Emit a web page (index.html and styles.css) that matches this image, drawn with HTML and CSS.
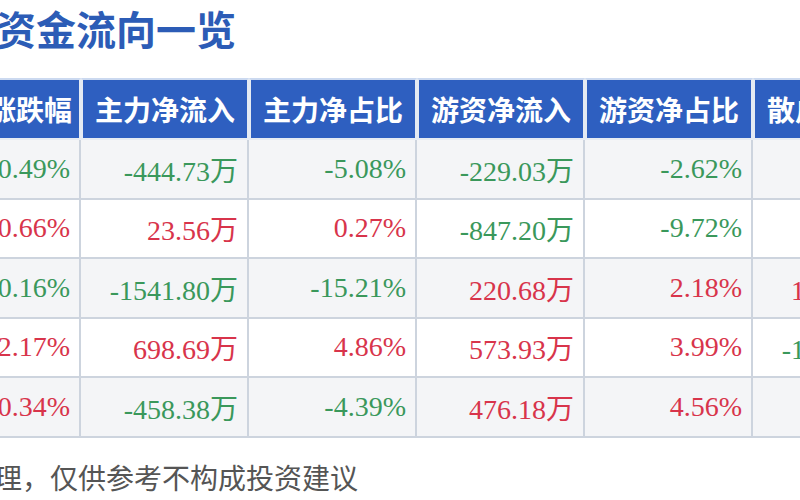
FILE: index.html
```html
<!DOCTYPE html>
<html lang="zh-CN">
<head>
<meta charset="utf-8">
<title>资金流向一览</title>
<link rel="stylesheet" href="styles.css">
</head>
<body>
<div class="page">
  <h1 class="title">资金流向一览</h1>
  <table class="flow">
    <colgroup>
      <col class="c-first">
      <col class="c-col"><col class="c-col"><col class="c-col"><col class="c-col"><col class="c-col">
    </colgroup>
    <thead>
      <tr>
        <th>涨跌幅</th>
        <th>主力净流入</th>
        <th>主力净占比</th>
        <th>游资净流入</th>
        <th>游资净占比</th>
        <th>散户净流入</th>
      </tr>
    </thead>
    <tbody>
      <tr class="shade">
        <td class="dn">-0.49%</td>
        <td class="dn">-444.73万</td>
        <td class="dn">-5.08%</td>
        <td class="dn">-229.03万</td>
        <td class="dn">-2.62%</td>
        <td class="up">673.76万</td>
      </tr>
      <tr>
        <td class="up">0.66%</td>
        <td class="up">23.56万</td>
        <td class="up">0.27%</td>
        <td class="dn">-847.20万</td>
        <td class="dn">-9.72%</td>
        <td class="up">823.64万</td>
      </tr>
      <tr class="shade">
        <td class="dn">-0.16%</td>
        <td class="dn">-1541.80万</td>
        <td class="dn">-15.21%</td>
        <td class="up">220.68万</td>
        <td class="up">2.18%</td>
        <td class="up">1321.12万</td>
      </tr>
      <tr>
        <td class="up">2.17%</td>
        <td class="up">698.69万</td>
        <td class="up">4.86%</td>
        <td class="up">573.93万</td>
        <td class="up">3.99%</td>
        <td class="dn">-1272.62万</td>
      </tr>
      <tr class="shade">
        <td class="up">0.34%</td>
        <td class="dn">-458.38万</td>
        <td class="dn">-4.39%</td>
        <td class="up">476.18万</td>
        <td class="up">4.56%</td>
        <td class="dn">-17.80万</td>
      </tr>
    </tbody>
  </table>
  <p class="note">理，仅供参考不构成投资建议</p>
</div>
</body>
</html>
```

FILE: styles.css
```css
html, body {
  margin: 0;
  padding: 0;
  background: #ffffff;
}

.page {
  width: 800px;
  height: 500px;
  overflow: hidden;
  font-family: "Noto Sans CJK SC", "Noto Sans", sans-serif;
}

.title {
  margin: 0 0 0 -4px;
  height: 78px;
  line-height: 56px;
  font-size: 40px;
  font-weight: 700;
  color: #2c5cb6;
  white-space: nowrap;
}

.flow {
  margin-left: -21px;
  border-collapse: separate;
  border-spacing: 0;
  table-layout: fixed;
  width: 942px;
}

.c-first { width: 102px; }
.c-col { width: 168px; }

.flow th {
  height: 58px;
  padding: 0;
  background: #2e5fc0;
  color: #ffffff;
  font-size: 28px;
  font-weight: 700;
  text-align: center;
  white-space: nowrap;
  border-top: 2px solid #cbd9f0;
  border-left: 2px solid #e4eaf3;
  border-right: 2px solid #e4eaf3;
  border-bottom: 2px solid #e7ecf3;
}

.flow td {
  height: 57.5px;
  padding: 0 9px 0 0;
  font-family: "Liberation Serif", "Noto Sans CJK SC", serif;
  font-size: 28px;
  text-align: right;
  white-space: nowrap;
  border-right: 2px solid #cdd4de;
  border-bottom: 2px solid #cdd4de;
  background: #ffffff;
}

.flow tr.shade td {
  background: #f4f5f7;
}

.flow td.up { color: #d8344b; }
.flow td.dn { color: #3a985b; }

.note {
  margin: 19px 0 0 -6px;
  line-height: 40px;
  font-size: 28px;
  color: #555555;
  white-space: nowrap;
}
```
